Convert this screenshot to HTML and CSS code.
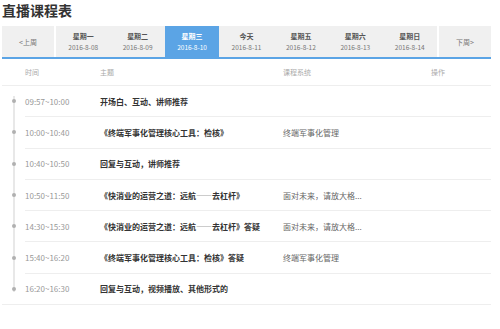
FILE: index.html
```html
<!DOCTYPE html>
<html lang="zh-CN">
<head>
  <meta charset="UTF-8" />
  <title>直播课程表</title>
  <link rel="stylesheet" href="styles.css">
</head>
<body>
  <h1 class="title">直播课程表</h1>

  <div class="week">
    <a href="#" class="week-nav">&lt;上周</a>
    <div class="day"><b>星期一</b><span>2016-8-08</span></div>
    <div class="day"><b>星期二</b><span>2016-8-09</span></div>
    <div class="day active"><b>星期三</b><span>2016-8-10</span></div>
    <div class="day"><b>今天</b><span>2016-8-11</span></div>
    <div class="day"><b>星期五</b><span>2016-8-12</span></div>
    <div class="day"><b>星期六</b><span>2016-8-13</span></div>
    <div class="day"><b>星期日</b><span>2016-8-14</span></div>
    <a href="#" class="week-nav">下周&gt;</a>
  </div>

  <div class="schedule">
    <div class="thead">
      <span class="c-time">时间</span>
      <span class="c-topic">主题</span>
      <span class="c-system">课程系统</span>
      <span class="c-op">操作</span>
    </div>
    <div class="tbody">
      <div class="row">
        <span class="c-time">09:57~10:00</span>
        <span class="c-topic">开场白、互动、讲师推荐</span>
        <span class="c-system"></span>
        <span class="c-op"></span>
      </div>
      <div class="row">
        <span class="c-time">10:00~10:40</span>
        <span class="c-topic">《终端军事化管理核心工具：检核》</span>
        <span class="c-system">终端军事化管理</span>
        <span class="c-op"></span>
      </div>
      <div class="row">
        <span class="c-time">10:40~10:50</span>
        <span class="c-topic">回复与互动，讲师推荐</span>
        <span class="c-system"></span>
        <span class="c-op"></span>
      </div>
      <div class="row">
        <span class="c-time">10:50~11:50</span>
        <span class="c-topic">《快消业的运营之道：远航——去杠杆》</span>
        <span class="c-system">面对未来，请放大格...</span>
        <span class="c-op"></span>
      </div>
      <div class="row">
        <span class="c-time">14:30~15:30</span>
        <span class="c-topic">《快消业的运营之道：远航——去杠杆》答疑</span>
        <span class="c-system">面对未来，请放大格...</span>
        <span class="c-op"></span>
      </div>
      <div class="row">
        <span class="c-time">15:40~16:20</span>
        <span class="c-topic">《终端军事化管理核心工具：检核》答疑</span>
        <span class="c-system">终端军事化管理</span>
        <span class="c-op"></span>
      </div>
      <div class="row">
        <span class="c-time">16:20~16:30</span>
        <span class="c-topic">回复与互动，视频播放、其他形式的</span>
        <span class="c-system"></span>
        <span class="c-op"></span>
      </div>
    </div>
  </div>
</body>
</html>
```

FILE: styles.css
```css
body {
    margin: 0;
    padding: 2px;
    font-family: "Noto Sans CJK SC", "Noto Sans", sans-serif;
    background-color: #fff;
    color: #333;
}

.title {
    margin: 0 0 8px 0;
    font-size: 14px;
    line-height: 16px;
    font-weight: bold;
    color: #333;
}

.week {
    display: flex;
    width: 489px;
    height: 31px;
    background-color: #f0f0f0;
    border-bottom: 2px solid #5ba4e5;
}

.week-nav {
    width: 52px;
    display: flex;
    align-items: center;
    justify-content: center;
    font-size: 7px;
    color: #777;
    text-decoration: none;
}

.week-nav:first-child {
    border-right: 2px solid #fff;
}

.week-nav:last-child {
    border-left: 2px solid #fff;
}

.day {
    flex: 1;
    display: flex;
    flex-direction: column;
    align-items: center;
    justify-content: center;
    gap: 2px;
}

.day b {
    font-size: 7px;
    line-height: 9px;
    color: #555;
}

.day span {
    font-size: 6.5px;
    line-height: 8px;
    color: #777;
}

.day.active {
    background-color: #5ba4e5;
}

.day.active b,
.day.active span {
    color: #fff;
}

.schedule {
    width: 489px;
    border-bottom: 1px solid #eee;
}

.thead {
    display: flex;
    align-items: center;
    height: 26px;
    padding-left: 23px;
    border-bottom: 1px solid #eee;
    font-size: 7px;
    color: #aaa;
}

.tbody {
    position: relative;
}

.tbody::before {
    content: "";
    position: absolute;
    left: 11px;
    top: 10px;
    bottom: 12px;
    width: 2px;
    background-color: #e8e8e8;
}

.row {
    position: relative;
    display: flex;
    align-items: center;
    height: 30.3px;
    margin-left: 23px;
    border-bottom: 1px solid #eee;
    font-size: 8px;
}

.row:last-child {
    border-bottom: none;
}

.row::before {
    content: "";
    position: absolute;
    left: -13px;
    top: 50%;
    width: 4px;
    height: 4px;
    margin-top: -2px;
    border-radius: 50%;
    background-color: #b0b0b0;
}

.c-time {
    width: 75px;
    color: #999;
}

.thead .c-time {
    color: #aaa;
}

.c-topic {
    width: 183px;
    white-space: nowrap;
}

.row .c-topic {
    font-weight: bold;
    color: #333;
}

.c-system {
    width: 148px;
    color: #666;
}

.thead .c-system {
    color: #aaa;
}

.c-op {
    flex: 1;
}
```
